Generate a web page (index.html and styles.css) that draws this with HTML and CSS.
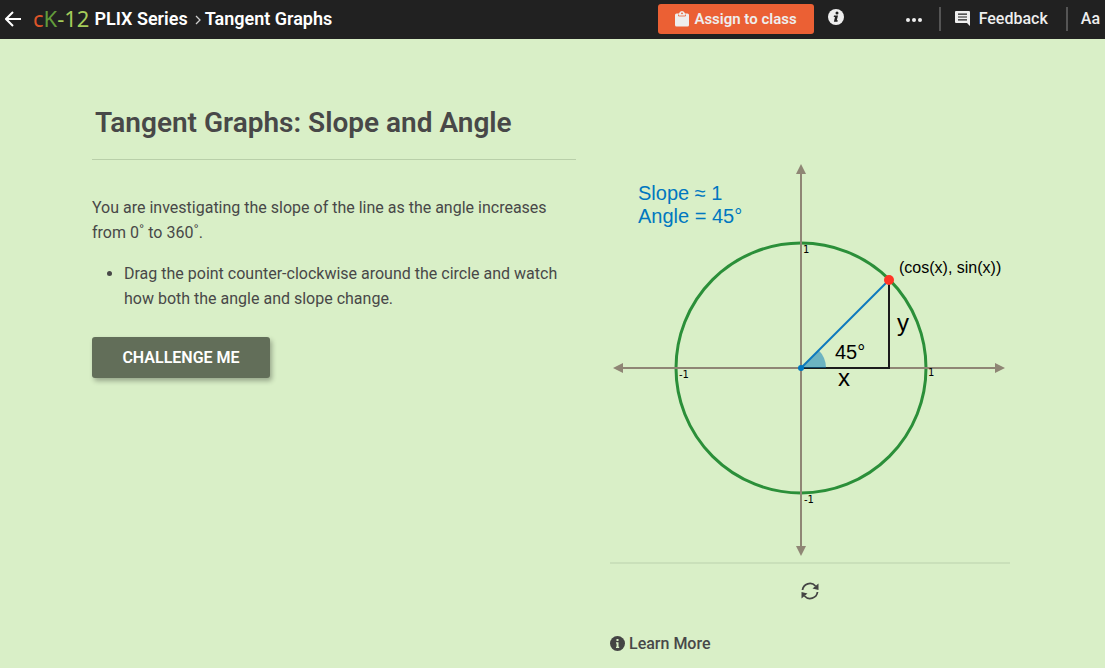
FILE: index.html
```html
<!DOCTYPE html>
<html lang="en">
<head>
    <meta charset="UTF-8">
    <title>Tangent Graphs: Slope and Angle</title>
    <link rel="stylesheet" href="styles.css">
</head>
<body>
  <header class="topbar">
    <nav class="breadcrumb">
      <a href="#" class="back" aria-label="Back">
        <svg width="16" height="16" viewBox="0 0 16 16" fill="none" stroke="#fff" stroke-width="2">
          <path d="M8 1 L1 8 L8 15 M1 8 H16"/>
        </svg>
      </a>
      <a href="#" class="logo"><span class="logo-c">c</span><span class="logo-k">K</span>-12</a>
      <a href="#" class="crumb">PLIX Series</a>
      <svg class="chevron" width="6" height="10" viewBox="0 0 6 10" fill="none" stroke="#ccc" stroke-width="1.3">
        <path d="M1 1 L5 5 L1 9"/>
      </svg>
      <span class="crumb">Tangent Graphs</span>
    </nav>
    <div class="actions">
      <button type="button" class="assign">
        <svg width="14" height="16" viewBox="0 0 14 16">
          <path fill="#eee" d="M1.500 2.500 H4 Q4.500 0 7 0 Q9.500 0 10 2.500 H12.500 Q14 2.500 14 4 V14 Q14 15.500 12.500 15.500 H1.500 Q0 15.500 0 14 V4 Q0 2.500 1.500 2.500 Z"/>
          <path d="M3.500 3.500 V5 H10.500 V3.500" fill="none" stroke="#eb6034" stroke-width=".8"/>
          <circle cx="7" cy="2.300" r=".9" fill="#eb6034"/>
        </svg>
        Assign to class
      </button>
      <button type="button" class="info" aria-label="Information">
        <svg width="16" height="16" viewBox="0 0 16 16">
          <circle cx="8" cy="8" r="8" fill="#eee"/>
          <circle cx="9" cy="4" r="1.500" fill="#212121"/>
          <path d="M6 6.500 H10 L8.800 11.300 H9.800 L9.500 12.700 H5.900 L7 8 H5.700 Z" fill="#212121"/>
        </svg>
      </button>
      <button type="button" class="more" aria-label="More">
        <svg width="16" height="4" viewBox="0 0 16 4" fill="#eee">
          <circle cx="2" cy="2" r="2"/>
          <circle cx="8" cy="2" r="2"/>
          <circle cx="14" cy="2" r="2"/>
        </svg>
      </button>
      <button type="button" class="feedback">
        <svg width="15" height="16" viewBox="0 0 15 16">
          <path d="M1 0 H14 Q15 0 15 1 V15 L12 12 H1 Q0 12 0 11 V1 Q0 0 1 0 Z" fill="#eee"/>
          <path d="M3 3.200 H12 M3 6 H12 M3 8.800 H12" stroke="#212121" stroke-width="1.200"/>
        </svg>
        Feedback
      </button>
      <button type="button" class="text-size">Aa</button>
    </div>
  </header>

  <main class="plix">
    <section class="question">
      <h1>Tangent Graphs: Slope and Angle</h1>
      <p>You are investigating the slope of the line as the angle increases from 0˚ to 360˚.</p>
      <ul>
        <li>Drag the point counter-clockwise around the circle and watch how both the angle and slope change.</li>
      </ul>
      <button type="button" class="challenge">CHALLENGE ME</button>
    </section>

    <section class="workspace">
      <svg class="graph" viewBox="0 0 400 400">
        <!-- unit circle -->
        <circle cx="191" cy="206" r="125" fill="none" stroke="#2b8f39" stroke-width="3"/>
        <!-- axes -->
        <g stroke="#8f8675" stroke-width="2">
          <path d="M10 206 H388"/>
          <path d="M191 10 V386"/>
        </g>
        <g fill="#8f8675">
          <path d="M3 206 L13 201 V211 Z"/>
          <path d="M395 206 L385 201 V211 Z"/>
          <path d="M191 2 L186 12 H196 Z"/>
          <path d="M191 394 L186 384 H196 Z"/>
        </g>
        <!-- triangle -->
        <path d="M191 206 H279 V118" fill="none" stroke="#1b1b1b" stroke-width="2"/>
        <path d="M191 206 H216 A25 25 0 0 0 208.700 188.300 Z" fill="#0077bb" fill-opacity=".5"/>
        <path d="M191 206 L279 118" stroke="#0c79be" stroke-width="2"/>
        <circle cx="191" cy="206" r="3" fill="#0077c0"/>
        <circle cx="279" cy="118" r="5" fill="#ff3426"/>
        <g class="readout">
          <text x="28" y="38">Slope ≈ 1</text>
          <text x="28" y="61">Angle = 45°</text>
        </g>
        <g class="tick">
          <text x="193" y="91">1</text>
          <text x="69" y="216">-1</text>
          <text x="318" y="214">1</text>
          <text x="194" y="341">-1</text>
        </g>
        <text class="point-label" x="289" y="111">(cos(x), sin(x))</text>
        <text class="angle-label" x="225" y="197">45°</text>
        <text class="side-label" x="228" y="224">x</text>
        <text class="side-label" x="287" y="169">y</text>
      </svg>
      <div class="controls">
        <button type="button" class="reset" aria-label="Reset">
          <svg width="18" height="18" viewBox="0 0 18 18">
            <path d="M1.500 8 A7.500 7.500 0 0 1 14.500 4 M16.500 10 A7.500 7.500 0 0 1 3.500 14" fill="none" stroke="#444" stroke-width="1.800"/>
            <path d="M17.500 1.500 V8 L11.500 6.500 Z M.5 16.500 V10 L6.500 11.500 Z" fill="#444"/>
          </svg>
        </button>
      </div>
      <a href="#" class="learn-more">
        <svg width="15" height="15" viewBox="0 0 15 15">
          <circle cx="7.500" cy="7.500" r="7.500" fill="#444"/>
          <path d="M6.500 3 H8.500 V5 H6.500 Z M6 6.200 H8.500 V10.800 H9.200 V12 H6 V10.800 H6.600 V7.400 H6 Z" fill="#d9efc7"/>
        </svg>
        Learn More
      </a>
    </section>
  </main>
</body>
</html>
```
FILE: styles.css
```css
* {
  box-sizing: border-box;
}

body {
  margin: 0;
  font-family: Roboto, Arial, sans-serif;
  font-size: 16px;
  color: #484848;
  background-color: #d9efc7;
}

button {
  margin: 0;
  padding: 0;
  border: 0;
  background: none;
  font-family: inherit;
  font-size: 16px;
  font-weight: 500;
  color: #eee;
  cursor: pointer;
}

a {
  color: inherit;
  text-decoration: none;
}

svg {
  display: block;
  flex-shrink: 0;
}

.topbar {
  display: flex;
  justify-content: space-between;
  height: 39px;
  padding: 0 5px 2px;
  color: #fff;
  background-color: #212121;
  white-space: nowrap;
}

.breadcrumb,
.actions {
  display: flex;
  align-items: center;
}

.back {
  margin-right: 12px;
}

.logo {
  margin-right: 5px;
  padding-bottom: 2px;
  font-family: "Noto Sans", sans-serif;
  font-size: 22px;
  line-height: 30px;
  color: #a5cd5a;
}

.logo-c {
  color: #dd5529;
}

.logo-k {
  color: #629c3b;
}

.crumb {
  font-size: 18px;
  font-weight: 600;
}

.chevron {
  margin: 2px 4px 0 7px;
}

.assign {
  display: flex;
  align-items: center;
  gap: 5px;
  height: 30px;
  padding: 0 17px;
  border-radius: 3px;
  background-color: #eb6034;
  font-size: 15px;
  font-weight: 600;
}

.info {
  margin: 0 62px 4px 14px;
}

.more {
  margin: 2px 17px 0 0;
}

.feedback,
.text-size {
  height: 24px;
  border-left: 2px solid #555;
}

.feedback {
  display: flex;
  align-items: center;
  gap: 9px;
  padding: 0 18px 0 14px;
}

.text-size {
  padding-left: 13px;
}

.plix {
  display: grid;
  grid-template-columns: 484fr 400fr;
  gap: 34px;
  padding: 64px 95px 0 92px;
}

.question h1 {
  margin: 0 0 35px;
  padding: 0 3px 16px;
  border-bottom: 1px solid #b9cfa9;
  font-size: 28px;
  line-height: 40px;
  font-weight: 600;
}

.question p,
.question ul {
  margin: 0 0 16px;
  line-height: 25px;
}

.question ul {
  margin-bottom: 26px;
  padding-left: 32px;
}

.challenge {
  width: 178px;
  height: 41px;
  border-radius: 3px;
  color: #fff;
  background-color: #626e59;
  font-weight: 600;
  box-shadow: 2px 3px 5px rgba(0, 0, 0, 0.3);
}

.workspace {
  padding-top: 59px;
}

.graph {
  width: 100%;
  font-family: "Liberation Sans", Arial, sans-serif;
}

.readout {
  font-size: 20px;
  fill: #0077c0;
}

.tick {
  font-family: "DejaVu Sans", sans-serif;
  font-size: 10px;
}

.point-label {
  font-size: 16px;
}

.angle-label {
  font-size: 20px;
}

.side-label {
  font-size: 24px;
}

.controls {
  display: flex;
  justify-content: center;
  padding: 18px 0 34px;
  border-top: 2px solid #cae0ba;
}

.learn-more {
  display: flex;
  align-items: center;
  gap: 4px;
  font-weight: 500;
}
```
